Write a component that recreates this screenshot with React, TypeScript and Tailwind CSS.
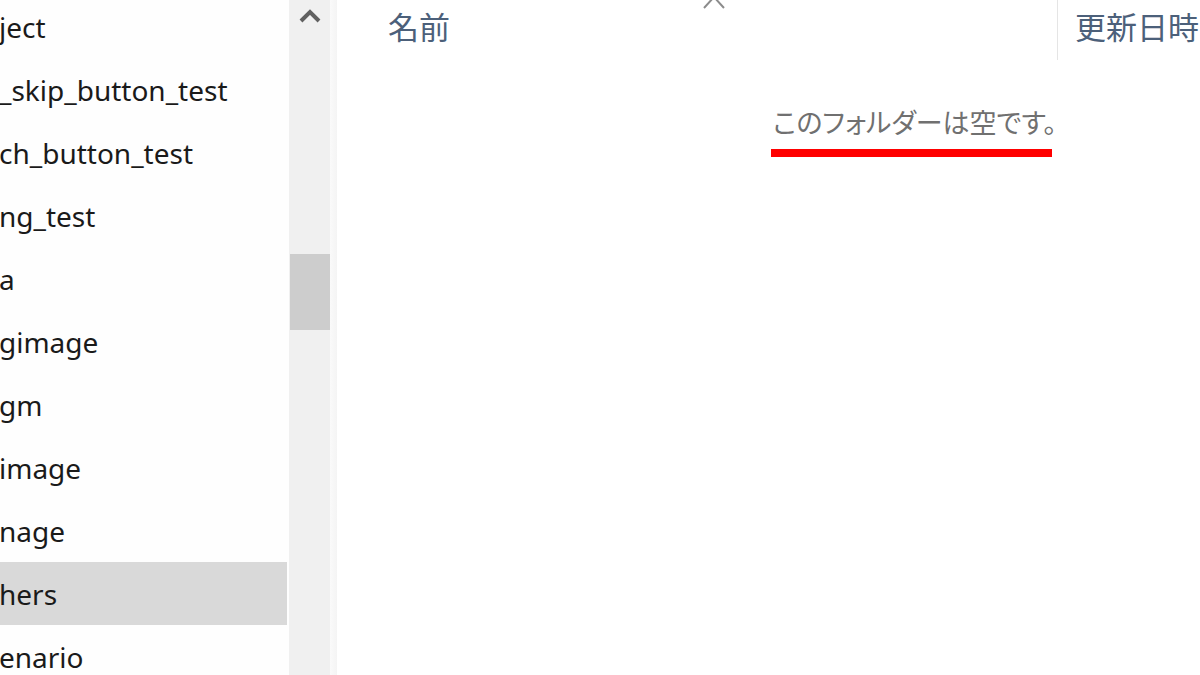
import React from "react";

const items = [
  "ject",
  "_skip_button_test",
  "ch_button_test",
  "ng_test",
  "a",
  "gimage",
  "gm",
  "image",
  "nage",
  "hers",
  "enario",
];

export default function App() {
  return (
    <div className="relative flex h-[675px] w-[1200px] overflow-hidden bg-white">
      {/* navigation pane */}
      <div className="w-[289px] shrink-0 bg-[#fefefe]">
        <div className="-mt-[5px] flex flex-col">
          {items.map((t, i) => (
            <div
              key={i}
              className={`flex h-[63px] w-[287px] items-center overflow-hidden ${
                i === 9 ? "bg-[#d9d9d9]" : ""
              }`}
            >
              <span
                className="-ml-[1px] whitespace-nowrap text-[28px] leading-none text-[#1a1a1a]"
                style={{ fontFamily: '"Noto Sans", "Open Sans", sans-serif' }}
              >
                {t}
              </span>
            </div>
          ))}
        </div>
      </div>

      {/* scrollbar */}
      <div className="flex w-[41px] shrink-0 flex-col items-center bg-[#f0f0f0]">
        <svg width="22" height="16" viewBox="0 0 22 16" className="mt-[7px]">
          <polyline
            points="2,14 11,5 20,14"
            fill="none"
            stroke="#606060"
            strokeWidth="4"
            strokeLinejoin="miter"
          />
        </svg>
        <div className="mt-[231px] h-[76px] w-[40px] bg-[#cdcdcd]" />
      </div>

      {/* separator */}
      <div className="w-[7px] shrink-0 bg-gradient-to-r from-[#fafafa] to-[#f4f4f4]" />

      {/* main view */}
      <div
        className="relative flex-1"
        style={{ fontFamily: '"Noto Sans CJK JP", "Noto Sans", sans-serif' }}
      >
        <div className="flex h-[60px]">
          <div className="flex w-[720px] shrink-0 items-center pb-[9px] pl-[51px]">
            <span className="text-[31px] leading-none text-[#4c607a]">名前</span>
          </div>
          <div className="w-px bg-[#e5e5e5]" />
          <div className="flex flex-1 items-center pb-[9px] pl-[17px]">
            <span className="whitespace-nowrap text-[31px] leading-none text-[#4c607a]">
              更新日時
            </span>
          </div>
        </div>

        {/* sort indicator */}
        <svg
          width="24"
          height="10"
          viewBox="0 0 24 10"
          className="absolute left-[365px] top-0"
        >
          <polyline
            points="2,8 12,-3 22,8"
            fill="none"
            stroke="#8c8c8c"
            strokeWidth="2"
          />
        </svg>

        <div className="pl-[436px] pt-[46px]">
          <div className="inline-flex flex-col">
            <span
              className="whitespace-nowrap text-[27px] leading-[32px] text-[#707070]"
              style={{ fontFeatureSettings: '"palt"' }}
            >
              このフォルダーは空です。
            </span>
            <div className="-ml-[2px] mt-[11px] h-[8px] w-[281px] bg-[#ff0000]" />
          </div>
        </div>
      </div>
    </div>
  );
}
